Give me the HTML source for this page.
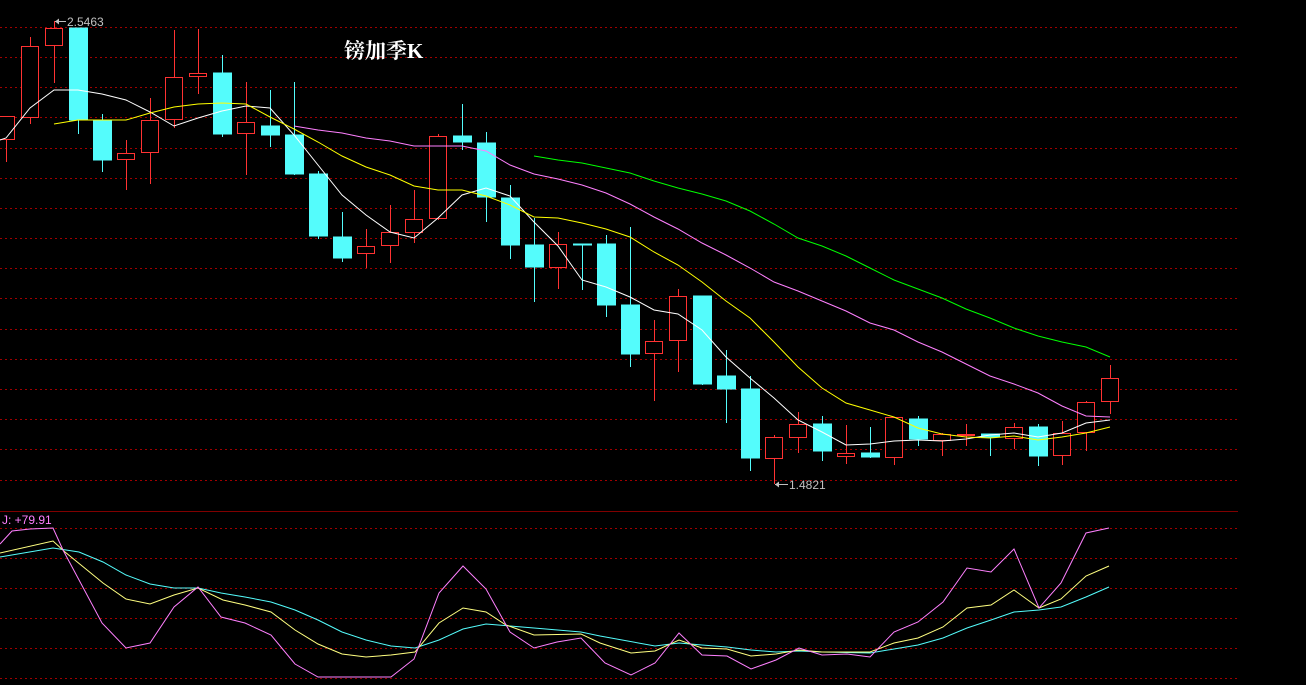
<!DOCTYPE html>
<html><head><meta charset="utf-8"><style>
html,body{margin:0;padding:0;background:#000;width:1306px;height:685px;overflow:hidden}
svg{display:block}
</style></head><body>
<svg width="1306" height="685" viewBox="0 0 1306 685" xmlns="http://www.w3.org/2000/svg" font-family="Liberation Sans, sans-serif">
<rect width="1306" height="685" fill="#000"/>
<g stroke="#a00000" stroke-width="1" stroke-dasharray="2,3" shape-rendering="crispEdges">
<line x1="0" y1="27.5" x2="1238" y2="27.5"/><line x1="0" y1="57.5" x2="1238" y2="57.5"/><line x1="0" y1="87.5" x2="1238" y2="87.5"/><line x1="0" y1="117.5" x2="1238" y2="117.5"/><line x1="0" y1="148.5" x2="1238" y2="148.5"/><line x1="0" y1="178.5" x2="1238" y2="178.5"/><line x1="0" y1="208.5" x2="1238" y2="208.5"/><line x1="0" y1="238.5" x2="1238" y2="238.5"/><line x1="0" y1="268.5" x2="1238" y2="268.5"/><line x1="0" y1="298.5" x2="1238" y2="298.5"/><line x1="0" y1="329.5" x2="1238" y2="329.5"/><line x1="0" y1="359.5" x2="1238" y2="359.5"/><line x1="0" y1="389.5" x2="1238" y2="389.5"/><line x1="0" y1="419.5" x2="1238" y2="419.5"/><line x1="0" y1="449.5" x2="1238" y2="449.5"/><line x1="0" y1="480.5" x2="1238" y2="480.5"/>
<line x1="0" y1="528.5" x2="1238" y2="528.5"/><line x1="0" y1="558.5" x2="1238" y2="558.5"/><line x1="0" y1="588.5" x2="1238" y2="588.5"/><line x1="0" y1="618.5" x2="1238" y2="618.5"/><line x1="0" y1="648.5" x2="1238" y2="648.5"/><line x1="0" y1="678.5" x2="1238" y2="678.5"/>
</g>
<line x1="0" y1="511.5" x2="1238" y2="511.5" stroke="#800000" stroke-width="1"/>

<g id="candles" shape-rendering="crispEdges">
<!-- red candles -->
<g stroke="#ff3232" stroke-width="1.2" fill="#000">
<line x1="6.5" y1="116" x2="6.5" y2="162"/><rect x="-2.5" y="116.5" width="17" height="23"/>
<line x1="30.5" y1="37" x2="30.5" y2="124"/><rect x="21.5" y="46.5" width="17" height="71"/>
<line x1="54.5" y1="21" x2="54.5" y2="83"/><rect x="45.5" y="28.5" width="17" height="17"/>
<line x1="126.5" y1="140" x2="126.5" y2="190"/><rect x="117.5" y="153.5" width="17" height="6"/>
<line x1="150.5" y1="98" x2="150.5" y2="184"/><rect x="141.5" y="120.5" width="17" height="32"/>
<line x1="174.5" y1="30" x2="174.5" y2="128"/><rect x="165.5" y="77.5" width="17" height="42"/>
<line x1="198.5" y1="29" x2="198.5" y2="94"/><rect x="189.5" y="73.5" width="17" height="3"/>
<line x1="246.5" y1="82" x2="246.5" y2="175"/><rect x="237.5" y="122.5" width="17" height="11"/>
<line x1="366.5" y1="229" x2="366.5" y2="268"/><rect x="357.5" y="246.5" width="17" height="7"/>
<line x1="390.5" y1="205" x2="390.5" y2="263"/><rect x="381.5" y="232.5" width="17" height="13"/>
<line x1="414.5" y1="190" x2="414.5" y2="243"/><rect x="405.5" y="219.5" width="17" height="13"/>
<line x1="438.5" y1="134" x2="438.5" y2="220"/><rect x="429.5" y="136.5" width="17" height="82"/>
<line x1="558.5" y1="232" x2="558.5" y2="289"/><rect x="549.5" y="244.5" width="17" height="23"/>
<line x1="654.5" y1="320" x2="654.5" y2="401"/><rect x="645.5" y="341.5" width="17" height="12"/>
<line x1="678.5" y1="289" x2="678.5" y2="372"/><rect x="669.5" y="296.5" width="17" height="44"/>
<line x1="774.5" y1="435" x2="774.5" y2="484"/><rect x="765.5" y="437.5" width="17" height="21"/>
<line x1="798.5" y1="412" x2="798.5" y2="453"/><rect x="789.5" y="424.5" width="17" height="13"/>
<line x1="846.5" y1="425" x2="846.5" y2="464"/><rect x="837.5" y="453.5" width="17" height="3"/>
<line x1="894.5" y1="417" x2="894.5" y2="465"/><rect x="885.5" y="417.5" width="17" height="40"/>
<line x1="942.5" y1="433" x2="942.5" y2="456"/><rect x="933.5" y="434.5" width="17" height="6"/>
<line x1="966.5" y1="424" x2="966.5" y2="446"/><rect x="957.5" y="434.5" width="17" height="1"/>
<line x1="1014.5" y1="423" x2="1014.5" y2="449"/><rect x="1005.5" y="427.5" width="17" height="11"/>
<line x1="1062.5" y1="421" x2="1062.5" y2="465"/><rect x="1053.5" y="433.5" width="17" height="22"/>
<line x1="1086.5" y1="401" x2="1086.5" y2="451"/><rect x="1077.5" y="402.5" width="17" height="30"/>
<line x1="1110.5" y1="365" x2="1110.5" y2="414"/><rect x="1101.5" y="378.5" width="17" height="23"/>
</g>
<!-- cyan candles -->
<g stroke="#54fcfc" stroke-width="1" fill="#54fcfc">
<line x1="78.5" y1="28" x2="78.5" y2="134"/><rect x="69.5" y="28" width="18" height="92"/>
<line x1="102.5" y1="114" x2="102.5" y2="172"/><rect x="93.5" y="120" width="18" height="40"/>
<line x1="222.5" y1="55" x2="222.5" y2="137"/><rect x="213.5" y="73" width="18" height="61"/>
<line x1="270.5" y1="90" x2="270.5" y2="147"/><rect x="261.5" y="126" width="18" height="9"/>
<line x1="294.5" y1="82" x2="294.5" y2="175"/><rect x="285.5" y="135" width="18" height="39"/>
<line x1="318.5" y1="171" x2="318.5" y2="239"/><rect x="309.5" y="174" width="18" height="62"/>
<line x1="342.5" y1="212" x2="342.5" y2="262"/><rect x="333.5" y="237" width="18" height="21"/>
<line x1="462.5" y1="104" x2="462.5" y2="150"/><rect x="453.5" y="136" width="18" height="6"/>
<line x1="486.5" y1="132" x2="486.5" y2="222"/><rect x="477.5" y="143" width="18" height="54"/>
<line x1="510.5" y1="185" x2="510.5" y2="259"/><rect x="501.5" y="198" width="18" height="47"/>
<line x1="534.5" y1="218" x2="534.5" y2="302"/><rect x="525.5" y="245" width="18" height="22"/>
<line x1="582.5" y1="244" x2="582.5" y2="290"/><rect x="573.5" y="244" width="18" height="1"/>
<line x1="606.5" y1="235" x2="606.5" y2="317"/><rect x="597.5" y="244" width="18" height="61"/>
<line x1="630.5" y1="227" x2="630.5" y2="367"/><rect x="621.5" y="305" width="18" height="49"/>
<line x1="702.5" y1="296" x2="702.5" y2="385"/><rect x="693.5" y="296" width="18" height="88"/>
<line x1="726.5" y1="350" x2="726.5" y2="423"/><rect x="717.5" y="376" width="18" height="13"/>
<line x1="750.5" y1="376" x2="750.5" y2="471"/><rect x="741.5" y="389" width="18" height="69"/>
<line x1="822.5" y1="416" x2="822.5" y2="461"/><rect x="813.5" y="424" width="18" height="27"/>
<line x1="870.5" y1="427" x2="870.5" y2="458"/><rect x="861.5" y="453" width="18" height="4"/>
<line x1="918.5" y1="416" x2="918.5" y2="446"/><rect x="909.5" y="419" width="18" height="20"/>
<line x1="990.5" y1="434" x2="990.5" y2="456"/><rect x="981.5" y="434" width="18" height="3"/>
<line x1="1038.5" y1="424" x2="1038.5" y2="466"/><rect x="1029.5" y="427" width="18" height="29"/>
</g>
</g>

<g fill="none" stroke-width="1">
<polyline stroke="#ffffff" points="0,140 6,138 30,108 54,90 78,90 102,94 126,100 150,112 174,126 198,118 222,111 246,106 270,108 294,135 318,165 342,195 366,215 390,232 414,238 438,218 462,195 486,188 510,196 534,222 558,246 582,280 606,287 630,297 654,310 678,314 702,330 726,357 750,378 774,398 798,420 822,432 846,445 870,444 894,441 918,440 942,441 966,439 990,435 1014,433 1038,437 1062,433 1086,423 1110,420"/>
<polyline stroke="#ffff00" points="54,124 78,120 126,120 150,113 174,107 198,104 222,103 246,104 270,117 294,129 318,142 342,156 366,167 390,175 414,186 438,190 462,190 486,196 510,205 534,217 558,218 582,223 606,229 630,237 654,252 678,265 702,282 726,301 750,318 774,342 798,367 822,388 846,403 870,410 894,417 918,428 942,434 966,437 990,438 1014,436 1038,440 1062,437 1086,433 1110,427"/>
<polyline stroke="#ff80ff" points="294,126 318,130 342,133 366,138 390,141 414,146 438,146 462,146 486,151 510,165 534,174 558,179 582,185 606,193 630,204 654,217 678,229 702,243 726,255 750,268 774,282 798,291 822,301 846,311 870,323 894,330 918,342 942,352 966,364 990,376 1014,384 1038,393 1062,406 1086,416 1110,417"/>
<polyline stroke="#00ff00" points="534,156 558,160 582,163 606,168 630,173 654,181 678,188 702,194 726,201 750,211 774,224 798,238 822,246 846,256 870,268 894,280 918,289 942,298 966,309 990,318 1014,328 1038,336 1062,342 1086,347 1110,357"/>

<polyline stroke="#54fcfc" points="0,557 53,548 79,552 103,562 126,575 150,584 174,588 198,588 221,593 245,597 271,602 295,610 318,620 342,632 366,640 391,646 415,648 439,640 463,629 486,624 510,626 534,628 581,632 600,636 655,646 679,643 702,645 727,647 751,650 776,652 799,651 822,652 870,653 894,649 918,645 943,638 967,628 991,620 1014,612 1039,610 1061,607 1086,597 1109,587"/>
<polyline stroke="#ffff80" points="0,553 53,541 65,552 103,583 126,599 150,604 174,595 198,588 223,600 245,605 271,612 295,630 318,644 342,654 366,657 391,655 415,652 439,623 463,608 486,612 506,625 534,635 581,634 600,643 631,653 655,651 679,640 702,648 727,649 751,656 776,654 799,650 822,652 870,652 894,643 918,638 943,627 967,608 991,605 1014,590 1039,608 1061,599 1086,576 1109,566"/>
<polyline stroke="#ff80ff" points="0,544 12,531 30,529 53,528 63,550 102,623 126,648 150,643 174,607 198,587 221,617 245,623 271,635 295,664 318,677 391,677 414,659 439,593 463,566 486,589 510,632 534,648 557,642 581,638 605,663 631,675 655,663 679,633 702,655 727,656 751,669 776,660 799,648 822,655 847,654 870,657 894,632 918,622 943,602 967,568 991,572 1014,549 1039,608 1061,583 1086,533 1109,528"/>
</g>

<g fill="#c0c0c0" font-size="12">
<line x1="55" y1="21.5" x2="66" y2="21.5" stroke="#c0c0c0"/><path d="M55 21.5 l4 -3 v6 z" fill="#c0c0c0"/>
<text x="67" y="26">2.5463</text>
<line x1="775" y1="484.5" x2="788" y2="484.5" stroke="#c0c0c0"/><path d="M775 484.5 l4 -3 v6 z" fill="#c0c0c0"/>
<text x="789" y="489">1.4821</text>
</g>
<text x="2" y="524" fill="#ff80ff" font-size="12">J: +79.91</text>
<text x="344" y="58" fill="#ffffff" font-size="21" font-weight="bold" font-family="Liberation Serif, Noto Serif CJK SC, serif">镑加季K</text>
</svg>
</body></html>
